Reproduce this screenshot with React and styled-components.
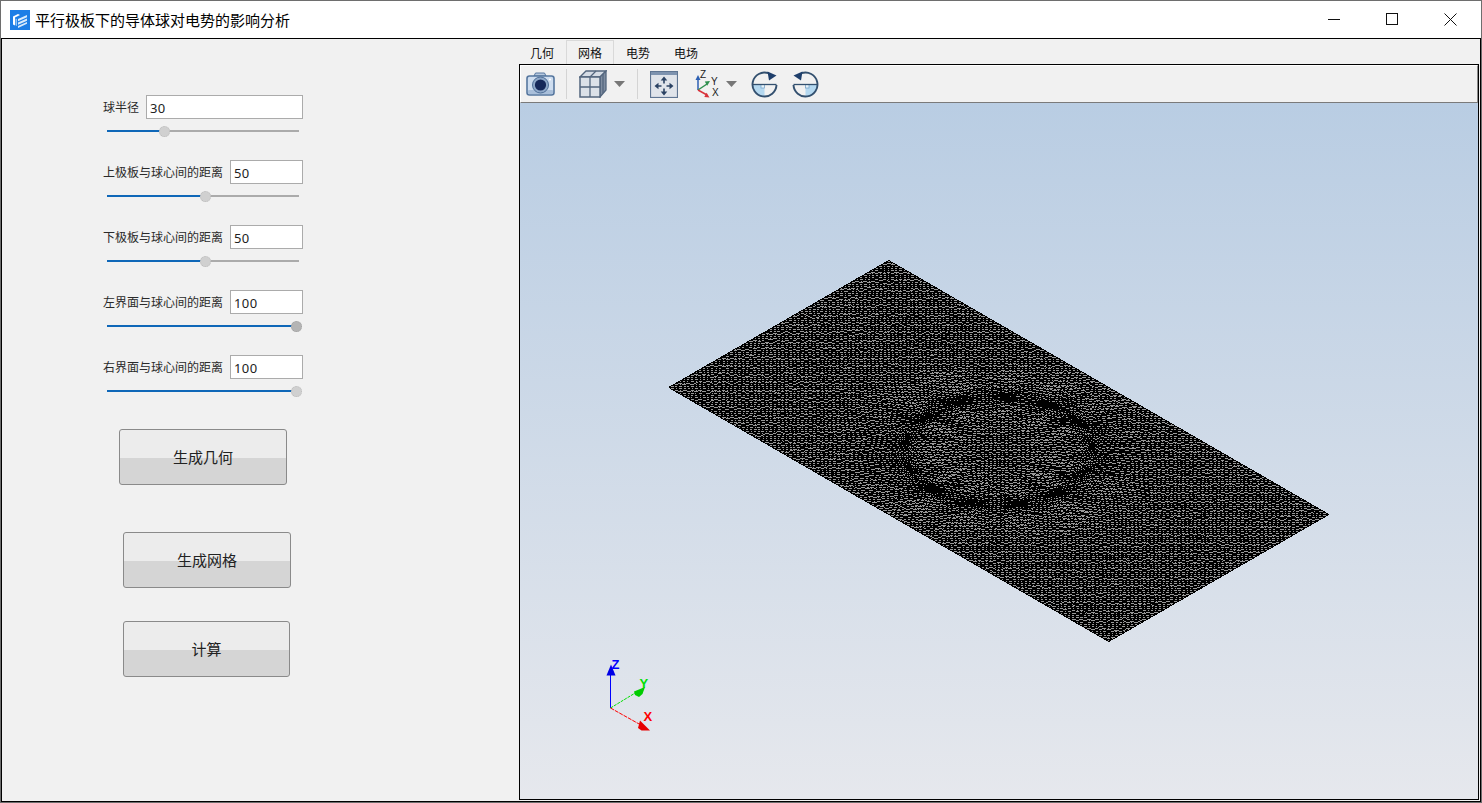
import React, { useMemo } from "react";
import styled, { createGlobalStyle } from "styled-components";

const cjk = '"Noto Sans CJK SC", "Noto Sans", sans-serif';

const GlobalStyle = createGlobalStyle`
  html, body {
    margin: 0;
    padding: 0;
    background: #fff;
    overflow: hidden;
  }
  * {
    box-sizing: border-box;
  }
`;

const params = [
  { label: "球半径", value: "30", thumb: 57 },
  { label: "上极板与球心间的距离", value: "50", thumb: 98 },
  { label: "下极板与球心间的距离", value: "50", thumb: 98 },
  { label: "左界面与球心间的距离", value: "100", thumb: 189, focused: true },
  { label: "右界面与球心间的距离", value: "100", thumb: 189 },
];

const actions = [
  { text: "生成几何", left: 117, top: 36, width: 168 },
  { text: "生成网格", left: 121, top: 47, width: 168 },
  { text: "计算", left: 121, top: 33, width: 167 },
];

const tabs = ["几何", "网格", "电势", "电场"];

// triangulated plate: a,b are model units, mapped to page pixels
const buildMesh = () => {
  let seed = 12345;
  const rand = () => {
    seed = (seed * 1103515245 + 12345) & 0x7fffffff;
    return seed / 0x7fffffff;
  };
  const nu = 112;
  const nv = 56;
  const du = 200 / nu;
  const dv = 100 / nv;
  const pts = [];
  for (let i = 0; i <= nu; i++) {
    pts[i] = [];
    for (let j = 0; j <= nv; j++) {
      let a = -100 + i * du;
      let b = -50 + j * dv;
      const edge = i === 0 || i === nu || j === 0 || j === nv;
      if (!edge) {
        a += (rand() - 0.5) * 0.4;
        b += (rand() - 0.5) * 0.4;
        const r = Math.hypot(a, b) || 1;
        const t = Math.atan2(b, a);
        // the ring is denser at the screen left and right of the circle
        const side = Math.abs(Math.cos(t + Math.PI / 4));
        const amp = 0.3 + 0.3 * side + 0.25 * Math.sin(t * 13);
        const d = (r - 30) / (8 + 4 * side);
        const r2 = r + amp * (30 - r) * Math.exp(-d * d);
        a = (a / r) * r2;
        b = (b / r) * r2;
      }
      pts[i][j] = [998.75 + a * 2.2 - b * 2.2, 450.5 + a * 1.27 + b * 1.27];
    }
  }
  const seg = (p, q) => `M${p[0].toFixed(1)} ${p[1].toFixed(1)}L${q[0].toFixed(1)} ${q[1].toFixed(1)}`;
  let d = "";
  for (let i = 0; i <= nu; i++) {
    for (let j = 0; j <= nv; j++) {
      if (i < nu) d += seg(pts[i][j], pts[i + 1][j]);
      if (j < nv) d += seg(pts[i][j], pts[i][j + 1]);
      if (i < nu && j < nv) d += seg(pts[i + 1][j], pts[i][j + 1]);
    }
  }
  return d;
};

const AppIcon = () => (
  <svg width="20" height="20" viewBox="0 0 20 20" style={{ display: "block" }}>
    <rect width="20" height="20" fill="#1c7ee6" />
    <path d="M3 6.5 8 4l2 1-5 2.5v8L3 14.5z" fill="#fff" />
    <path d="M8 9l9-4v2.2l-9 4zM8 12.5l9-4v2.2l-9 4zM8 16l9-4v1.8L8 18z" fill="#d9ebfc" />
    <path d="M5.5 8.5 7 9v7l-1.5-.7z" fill="#8fc4f5" />
  </svg>
);

const MinIcon = () => (
  <svg width="13" height="13" viewBox="0 0 13 13" shapeRendering="crispEdges">
    <path d="M0.5 6.5H12.5" stroke="#111" fill="none" />
  </svg>
);

const MaxIcon = () => (
  <svg width="13" height="13" viewBox="0 0 13 13" shapeRendering="crispEdges">
    <rect x="0.5" y="0.5" width="11" height="11" stroke="#111" fill="none" />
  </svg>
);

const CloseIcon = () => (
  <svg width="13" height="13" viewBox="0 0 13 13">
    <path d="M0.5 0.5 12.5 12.5M12.5 0.5 0.5 12.5" stroke="#111" fill="none" />
  </svg>
);

const CameraIcon = () => (
  <svg width="29" height="26" viewBox="0 0 29 26">
    <path d="M8 5l1.5-3h9L20 5z" fill="#b7c9df" stroke="#56779f" />
    <rect x="1" y="5" width="27" height="19" rx="2.5" fill="#cfdef0" stroke="#56779f" strokeWidth="1.6" />
    <rect x="2" y="19" width="25" height="4" rx="1" fill="#a9bfda" />
    <circle cx="14.5" cy="14" r="8" fill="#8fa9c9" stroke="#4f6f98" />
    <circle cx="14.5" cy="14" r="5.6" fill="#16295a" />
    <circle cx="24" cy="8.5" r="1.1" fill="#fff" />
  </svg>
);

const CubeIcon = () => (
  <svg width="28" height="28" viewBox="0 0 28 28">
    <path d="M7 1h20l-6 6H1z" fill="#d5dce5" stroke="#53667e" strokeWidth="1.3" />
    <path d="M21 7l6-6v19l-6 7z" fill="#7f8da1" stroke="#53667e" strokeWidth="1.3" />
    <rect x="1" y="7" width="20" height="20" fill="#dbe1e8" stroke="#53667e" strokeWidth="1.5" />
    <path d="M11 7v20M1 17h20M17 1l-6 6M24 4v19" fill="none" stroke="#53667e" strokeWidth="1.3" />
  </svg>
);

const DropArrow = () => (
  <svg width="11" height="6" viewBox="0 0 11 6">
    <path d="M0 0h11L5.5 6z" fill="#777" />
  </svg>
);

const FitIcon = () => (
  <svg width="28" height="27" viewBox="0 0 28 27">
    <rect x="0.5" y="0.5" width="27" height="26" fill="#e0e4ea" stroke="#5f7592" strokeWidth="1.2" />
    <rect x="1" y="1" width="26" height="3" fill="#7e93af" />
    <path d="M14 8.5v4M14 17.500v4M7.500 15h4M16.500 15h4" stroke="#2b4263" strokeWidth="1.6" fill="none" />
    <path d="M14 5.500l3.300 4h-6.600zM14 24.500l3.300-4h-6.600zM4.500 15l4-3.300v6.600zM23.500 15l-4-3.300v6.600z" fill="#2b4263" />
  </svg>
);

const AxesIcon = () => (
  <AxesSvg width="26" height="28" viewBox="0 0 26 28">
    <path d="M3 20V8" stroke="#2c5fb3" strokeWidth="1.5" fill="none" />
    <path d="M3 5 0.5 10h5z" fill="#2c5fb3" />
    <path d="M3 20l9-6" stroke="#2f8f4e" strokeWidth="1.5" fill="none" />
    <path d="M15 11l-5.200.6 2.400 4.200z" fill="#2f8f4e" />
    <path d="M3 20l9 5" stroke="#d8323a" strokeWidth="1.5" fill="none" />
    <path d="M14.500 27.500l-5.200-.4 2.300-4.300z" fill="#d8323a" />
    <AxisLetter x="5" y="8">Z</AxisLetter>
    <AxisLetter x="16" y="15">Y</AxisLetter>
    <AxisLetter x="17" y="26">X</AxisLetter>
  </AxesSvg>
);

const RotateIcon = ({ $flip }) => (
  <svg width="27" height="27" viewBox="0 0 27 27" style={{ transform: $flip ? "scaleX(-1)" : "none" }}>
    <path d="M1.500 13.500a12 12 0 0 0 12 12V13.500z" fill="#b4d8f0" />
    <rect x="10" y="13.500" width="3.500" height="3.500" fill="#e6f2fa" stroke="#6f9ec4" strokeWidth="0.7" />
    <path d="M1.500 13.500H25.500" stroke="#33506f" strokeWidth="1.3" fill="none" />
    <path d="M17.500 2.200A12 12 0 1 0 25.500 14" stroke="#33506f" strokeWidth="1.9" fill="none" />
    <path d="M16.500 0.500 25.500 4.500 18 9.500z" fill="#1f3f6b" />
  </svg>
);

const Triad = () => (
  <g>
    <path d="M610.500 707.500V672" stroke="#0000ff" fill="none" />
    <path d="M611 664l4.500 11h-9z" fill="#0000e6" />
    <path d="M610.500 707.500 636 692" stroke="#00e000" strokeDasharray="3 1" fill="none" />
    <path d="M645 686.500l-2.500 7-3.500 3-4-2-1-3.500z" fill="#00cc00" />
    <path d="M610.500 707.500 640 724" stroke="#ff0000" strokeDasharray="4 1" fill="none" />
    <path d="M640 720l10 10h-8.500l-3.500-2.500z" fill="#e60000" />
    <TriadLetter x="611.500" y="668" fill="#0000ff">Z</TriadLetter>
    <TriadLetter x="639.500" y="687" fill="#00e000">Y</TriadLetter>
    <TriadLetter x="643.500" y="720" fill="#ff0000">X</TriadLetter>
  </g>
);

const App = () => {
  const meshPath = useMemo(buildMesh, []);

  return (
    <Window>
      <GlobalStyle />
      <TitleBar>
        <TitleLeft>
          <AppIcon />
          <TitleText>平行极板下的导体球对电势的影响分析</TitleText>
        </TitleLeft>
        <WindowControls>
          <WindowButton><MinIcon /></WindowButton>
          <WindowButton><MaxIcon /></WindowButton>
          <WindowButton><CloseIcon /></WindowButton>
        </WindowControls>
      </TitleBar>

      <Body>
        <LeftPanel>
          {params.map((p) => (
            <ParamGroup key={p.label}>
              <ParamRow>
                <ParamLabel>{p.label}</ParamLabel>
                <ParamInput readOnly value={p.value} />
              </ParamRow>
              <SliderTrack>
                <SliderFill style={{ width: p.thumb }} />
                <SliderThumb $focused={p.focused} style={{ left: p.thumb }} />
              </SliderTrack>
            </ParamGroup>
          ))}
          {actions.map((a) => (
            <ActionButton key={a.text} $left={a.left} $top={a.top} $width={a.width}>
              {a.text}
            </ActionButton>
          ))}
        </LeftPanel>

        <RightPanel>
          <TabBar>
            {tabs.map((t) => (
              <Tab key={t} $active={t === "网格"}>{t}</Tab>
            ))}
          </TabBar>
          <Frame>
            <Toolbar>
              <ToolSlot $left={5}><CameraIcon /></ToolSlot>
              <ToolDivider $left={11} />
              <ToolSlot $left={12}><CubeIcon /></ToolSlot>
              <ToolSlot $left={7}><DropArrow /></ToolSlot>
              <ToolDivider $left={12} />
              <ToolSlot $left={12}><FitIcon /></ToolSlot>
              <ToolSlot $left={17}><AxesIcon /></ToolSlot>
              <ToolSlot $left={5}><DropArrow /></ToolSlot>
              <ToolSlot $left={14}><RotateIcon /></ToolSlot>
              <ToolSlot $left={14}><RotateIcon $flip /></ToolSlot>
            </Toolbar>
            <Viewer>
              <ViewerCanvas viewBox="520 103 958 695">
                <polygon points="889,260 1329,514 1108,641 669,387" fill="#999" />
                <path d={meshPath} stroke="#000" strokeWidth="1" fill="none" shapeRendering="crispEdges" />
                <Triad />
              </ViewerCanvas>
            </Viewer>
          </Frame>
        </RightPanel>
      </Body>
    </Window>
  );
};

const Window = styled.div`
  width: 1482px;
  height: 803px;
  border: 1px solid #6e6e6e;
  display: flex;
  flex-direction: column;
  background: #fff;
  font-family: ${cjk};
`;

const TitleBar = styled.div`
  height: 37px;
  display: flex;
  align-items: center;
  justify-content: space-between;
  background: #fff;
  padding-left: 9px;
`;

const TitleLeft = styled.div`
  display: flex;
  align-items: center;
  gap: 5px;
`;

const TitleText = styled.span`
  font-size: 15px;
  color: #000;
`;

const WindowControls = styled.div`
  display: flex;
  padding-right: 1px;
`;

const WindowButton = styled.div`
  width: 58.5px;
  height: 37px;
  display: flex;
  align-items: center;
  justify-content: center;
`;

const Body = styled.div`
  height: 764px;
  border: 1px solid #000;
  display: flex;
  background: #f1f1f1;
`;

const LeftPanel = styled.div`
  width: 517px;
  padding-top: 56px;
  display: flex;
  flex-direction: column;
  align-items: flex-start;
`;

const ParamGroup = styled.div`
  width: 200px;
  height: 65px;
  margin-left: 101px;
  flex-shrink: 0;
  &:last-of-type {
    height: 38px;
  }
`;

const ParamRow = styled.div`
  display: flex;
  align-items: center;
  gap: 7px;
`;

const ParamLabel = styled.span`
  font-size: 12px;
  color: #2a2a2a;
  white-space: nowrap;
  padding-bottom: 2px;
`;

const ParamInput = styled.input`
  flex: 1;
  min-width: 0;
  height: 24px;
  border: 1px solid #ababab;
  background: #fff;
  padding: 2px 3px 0;
  font-family: "Noto Sans", sans-serif;
  font-size: 13px;
  letter-spacing: 0.4px;
  color: #222;
  outline: none;
`;

const SliderTrack = styled.div`
  position: relative;
  width: 192px;
  height: 2px;
  margin: 11px 0 0 4px;
  background: #ababab;
`;

const SliderFill = styled.div`
  height: 100%;
  background: #0f67b8;
`;

const SliderThumb = styled.div`
  position: absolute;
  top: 50%;
  width: 11px;
  height: 11px;
  margin: -5px 0 0 -5.5px;
  border-radius: 50%;
  background: ${(p) => (p.$focused ? "#b4b4b4" : "#d0d0d0")};
  border: 1px dotted ${(p) => (p.$focused ? "#a0a0a0" : "#bcbcbc")};
`;

const ActionButton = styled.button`
  flex-shrink: 0;
  margin: ${(p) => p.$top}px 0 0 ${(p) => p.$left}px;
  width: ${(p) => p.$width}px;
  height: 56px;
  padding: 0 0 2px;
  border: 1px solid #8a8a8a;
  border-radius: 3px;
  background: linear-gradient(to bottom, #ececec 52%, #d5d5d5 52%);
  font-family: ${cjk};
  font-size: 15px;
  color: #222;
`;

const RightPanel = styled.div`
  flex: 1;
  display: flex;
  flex-direction: column;
  padding: 0 1px 1px 0;
`;

const TabBar = styled.div`
  height: 25px;
  margin-left: -1px;
  display: flex;
  align-items: flex-end;
`;

const Tab = styled.div`
  width: 48px;
  height: 24px;
  display: flex;
  align-items: center;
  justify-content: center;
  font-size: 12px;
  color: #111;
  border: 1px solid ${(p) => (p.$active ? "#d9d9d9" : "transparent")};
  border-bottom: none;
  background: #f1f1f1;
`;

const Frame = styled.div`
  flex: 1;
  display: flex;
  flex-direction: column;
  border: 1px solid #000;
  min-height: 0;
`;

const Toolbar = styled.div`
  height: 38px;
  display: flex;
  align-items: center;
  background: #f1f1f1;
  border-top: 1px solid #fff;
  border-left: 1px solid #fff;
  border-right: 1px solid #8a8a8a;
  border-bottom: 1px solid #7a7a7a;
`;

const ToolSlot = styled.div`
  display: flex;
  margin-left: ${(p) => p.$left}px;
`;

const ToolDivider = styled.div`
  width: 1px;
  height: 30px;
  margin-left: ${(p) => p.$left}px;
  background: #d4d4d4;
`;

const AxesSvg = styled.svg`
  overflow: visible;
`;

const AxisLetter = styled.text`
  font-family: "Liberation Sans", sans-serif;
  font-size: 10px;
  fill: #222;
`;

const TriadLetter = styled.text`
  font-family: "Liberation Sans", sans-serif;
  font-size: 13px;
  font-weight: 700;
`;

const Viewer = styled.div`
  flex: 1;
  min-height: 0;
  background: linear-gradient(to bottom, #b9cde3, #e6e8ed);
`;

const ViewerCanvas = styled.svg`
  display: block;
  width: 100%;
  height: 100%;
`;

export default App;
